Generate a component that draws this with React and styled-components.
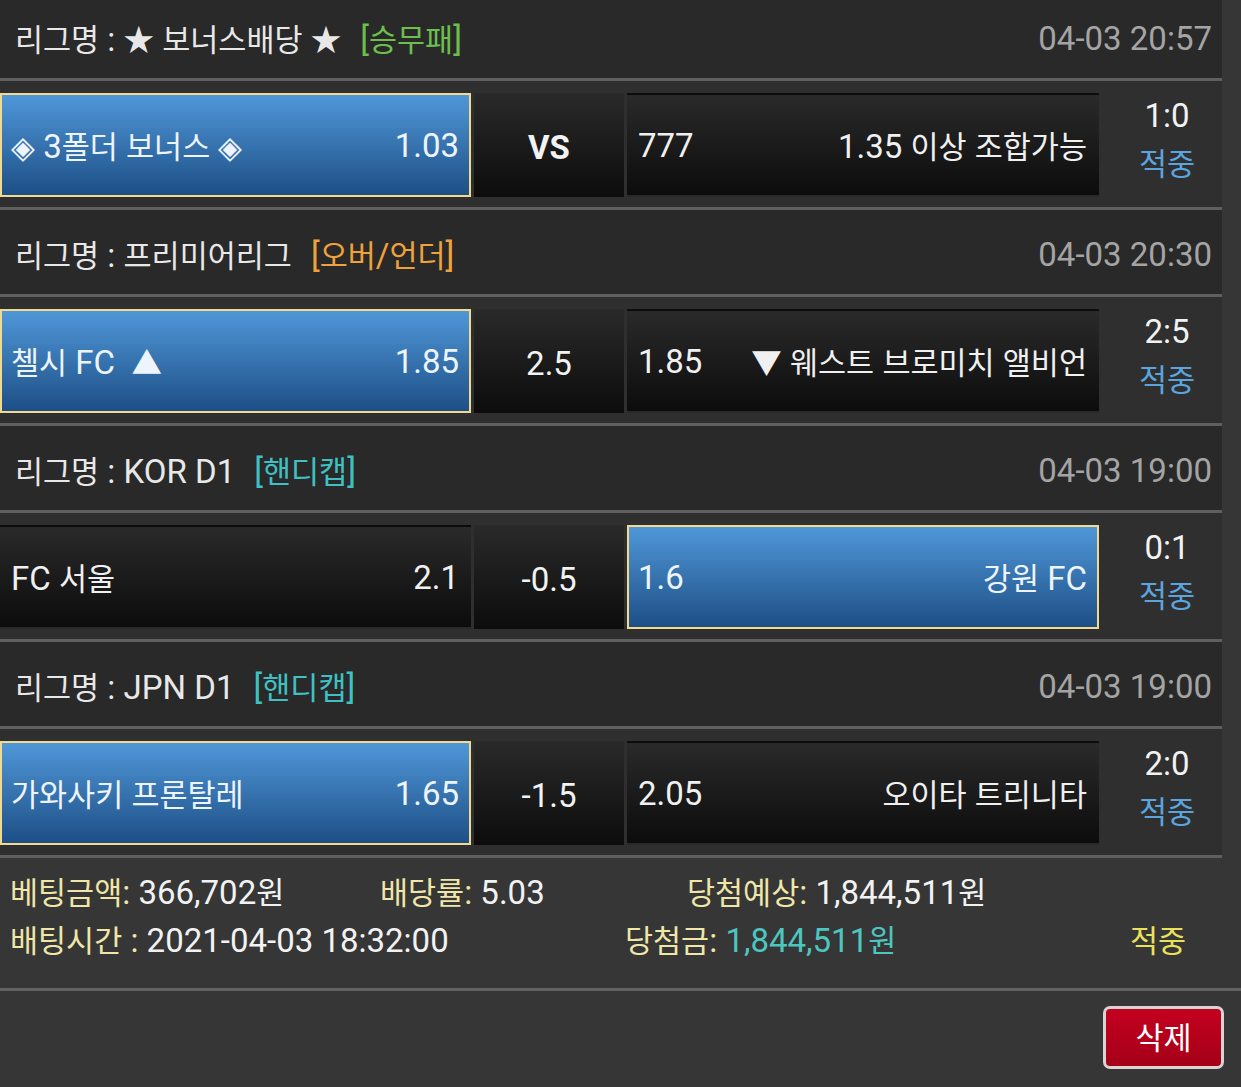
import React from 'react'
import styled, { createGlobalStyle } from 'styled-components';

const GlobalStyle = createGlobalStyle`
    html, body {
        margin: 0;
        padding: 0;
        background-color: #363636;
    }
    body {
        font-family: Roboto, "Noto Sans CJK KR", sans-serif;
        overflow: hidden;
    }
`

const matches = [
    {
        id: 1,
        league: '★ 보너스배당 ★',
        tag: '[승무패]',
        tagColor: '#6cbf4c',
        date: '04-03 20:57',
        home: '◈ 3폴더 보너스 ◈',
        homeOdds: '1.03',
        mid: 'VS',
        bold: true,
        awayOdds: '777',
        away: '1.35 이상 조합가능',
        pick: 'home',
        score: '1:0',
    },
    {
        id: 2,
        league: '프리미어리그',
        tag: '[오버/언더]',
        tagColor: '#f0a23a',
        date: '04-03 20:30',
        home: '첼시 FC  ▲',
        homeOdds: '1.85',
        mid: '2.5',
        awayOdds: '1.85',
        away: '▼ 웨스트 브로미치 앨비언',
        pick: 'home',
        score: '2:5',
    },
    {
        id: 3,
        league: 'KOR D1',
        tag: '[핸디캡]',
        tagColor: '#3fc1c4',
        date: '04-03 19:00',
        home: 'FC 서울',
        homeOdds: '2.1',
        mid: '-0.5',
        awayOdds: '1.6',
        away: '강원 FC',
        pick: 'away',
        score: '0:1',
    },
    {
        id: 4,
        league: 'JPN D1',
        tag: '[핸디캡]',
        tagColor: '#3fc1c4',
        date: '04-03 19:00',
        home: '가와사키 프론탈레',
        homeOdds: '1.65',
        mid: '-1.5',
        awayOdds: '2.05',
        away: '오이타 트리니타',
        pick: 'home',
        score: '2:0',
    },
]

// korean runs (and the little symbols) are set a bit smaller than latin/digits
const T = ({ children }) => (
    <>
        {String(children).split(/([\uAC00-\uD7A3\u2605\u25C8\u25B2\u25BC]+)/).map((part, i) =>
            /[\uAC00-\uD7A3\u2605\u25C8\u25B2\u25BC]/.test(part)
                ? <Hangul key={i}>{part}</Hangul>
                : part
        )}
    </>
)

function App() {
    return (
        <>
            <GlobalStyle />
            <Page>
                <List>
                    {matches.map(m => (
                        <Block key={m.id}>
                            <LeagueHeader>
                                <LeagueName>
                                    <T>{'리그명 : ' + m.league}</T>
                                    <Tag $color={m.tagColor}><T>{m.tag}</T></Tag>
                                </LeagueName>
                                <DateText>{m.date}</DateText>
                            </LeagueHeader>
                            <MatchRow>
                                <Pick $selected={m.pick === 'home'}>
                                    <span><T>{m.home}</T></span>
                                    <span>{m.homeOdds}</span>
                                </Pick>
                                <Middle $bold={m.bold}>{m.mid}</Middle>
                                <Pick $selected={m.pick === 'away'}>
                                    <span>{m.awayOdds}</span>
                                    <span><T>{m.away}</T></span>
                                </Pick>
                                <ScoreCol>
                                    <Score>{m.score}</Score>
                                    <Result><T>적중</T></Result>
                                </ScoreCol>
                            </MatchRow>
                        </Block>
                    ))}
                </List>

                <Summary>
                    <SummaryLine $cols="370px 307px 1fr">
                        <span><Label><T>베팅금액</T>:</Label> 366,702<T>원</T></span>
                        <span><Label><T>배당률</T>:</Label> 5.03</span>
                        <span><Label><T>당첨예상</T>:</Label> 1,844,511<T>원</T></span>
                    </SummaryLine>
                    <SummaryLine $cols="615px 505px 1fr">
                        <span><Label><T>배팅시간</T> :</Label> 2021-04-03 18:32:00</span>
                        <span><Label><T>당첨금</T>:</Label> <Won>1,844,511<T>원</T></Won></span>
                        <Hit><T>적중</T></Hit>
                    </SummaryLine>
                </Summary>

                <Footer>
                    <DeleteButton><T>삭제</T></DeleteButton>
                </Footer>
            </Page>
        </>
    )
}

export default App

const Page = styled.div`
    width: 1241px;
    height: 1087px;
    overflow: hidden;
    background-color: #363636;
    color: #f2f2f2;
    font-size: 33px;
`

const Hangul = styled.span`
    font-family: "Noto Sans CJK KR", Roboto, sans-serif;
    font-size: 30.5px;
`

const List = styled.div`
    width: 1222px;
    margin-top: -6px;
`

const Block = styled.div`
    display: flex;
    flex-direction: column;
`

const LeagueHeader = styled.div`
    height: 80px;
    padding: 4px 10px 0 15px;
    display: flex;
    align-items: center;
    justify-content: space-between;
    background-color: #292929;
    border-bottom: 3px solid #5f5f5f;
`

const LeagueName = styled.div`
    color: #e8e8e8;
    white-space: pre;
`

const Tag = styled.span`
    color: ${props => props.$color};
    margin-left: 19px;
`

const DateText = styled.div`
    color: #a4a4a4;
`

const MatchRow = styled.div`
    height: 104px;
    padding: 12px 0 10px;
    display: grid;
    grid-template-columns: 471px 150px 472px 1fr;
    column-gap: 3px;
    background-color: #2f2f2f;
    border-bottom: 3px solid #5f5f5f;
`

const Pick = styled.div`
    display: flex;
    align-items: center;
    justify-content: space-between;
    box-sizing: border-box;
    padding: 0 10px 0 9px;
    white-space: pre;
    color: ${props => props.$selected ? '#eef4fb' : '#f0f0f0'};
    background: ${props => props.$selected
        ? 'linear-gradient(to bottom, #4f97d8, #1d4f86)'
        : 'linear-gradient(to bottom, #2a2a2a, #0c0c0c)'};
    border: ${props => props.$selected ? '2px solid #f1d98e' : '2px solid transparent'};
`

const Middle = styled.div`
    display: flex;
    align-items: center;
    justify-content: center;
    padding-top: 4px;
    font-weight: ${props => props.$bold ? 700 : 400};
    background: linear-gradient(to bottom, #2a2a2a, #0c0c0c);
`

const ScoreCol = styled.div`
    display: flex;
    flex-direction: column;
    align-items: center;
    padding-left: 10px;
    line-height: 46px;
`

const Score = styled.div`
    color: #f2f2f2;
`

const Result = styled.div`
    color: #5ba4de;
`

const Summary = styled.div`
    padding: 10px 0 24px 10px;
    border-bottom: 3px solid #626262;
    line-height: 46px;
`

const SummaryLine = styled.div`
    display: grid;
    grid-template-columns: ${props => props.$cols};
    white-space: nowrap;
`

const Label = styled.span`
    color: #efe6a8;
`

const Won = styled.span`
    color: #4dc6c0;
`

const Hit = styled.span`
    color: #e9e15c;
`

const Footer = styled.div`
    display: flex;
    justify-content: flex-end;
    padding: 15px 17px 0 0;
`

const DeleteButton = styled.button`
    width: 121px;
    height: 63px;
    box-sizing: border-box;
    border: 3px solid #dcd3d3;
    border-radius: 7px;
    background: linear-gradient(to bottom, #c4001f, #a50018);
    color: #ffffff;
    font-family: Roboto, "Noto Sans CJK KR", sans-serif;
    font-size: 33px;
    padding: 0 0 4px;
`
